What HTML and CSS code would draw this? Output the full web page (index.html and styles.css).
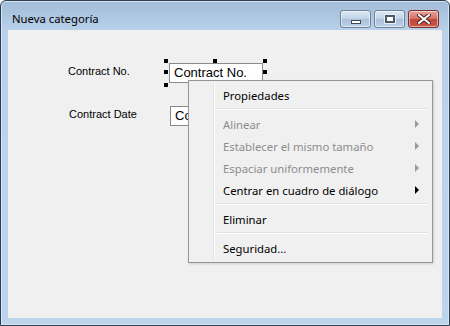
FILE: index.html
```html
<!DOCTYPE html>
<html lang="es">
<head>
    <meta charset="UTF-8">
    <title>Nueva categoría</title>
    <link rel="stylesheet" href="styles.css">
</head>
<body>
<div class="window">
    <div class="titlebar">
        <span class="title">Nueva categoría</span>
        <div class="caption-buttons">
            <div class="cap-btn"><span class="glyph-min"></span></div>
            <div class="cap-btn"><span class="glyph-max"></span></div>
            <div class="cap-btn close">
                <svg width="14" height="10" viewBox="0 0 14 10">
                    <path d="M2 1 L12 9 M12 1 L2 9" stroke="#4a2020" stroke-width="4" stroke-linecap="square"/>
                    <path d="M2 1 L12 9 M12 1 L2 9" stroke="#fff" stroke-width="2" stroke-linecap="square"/>
                </svg>
            </div>
        </div>
    </div>
    <div class="client">
        <!-- designer canvas: controls sit where the form puts them -->
        <span class="label lbl-no">Contract No.</span>
        <div class="textbox tb-no">Contract No.</div>
        <span class="label lbl-date">Contract Date</span>
        <div class="textbox tb-date">Contract Date</div>

        <span class="handle" style="left:156px; top:29px"></span>
        <span class="handle" style="left:205px; top:29px"></span>
        <span class="handle" style="left:255px; top:29px"></span>
        <span class="handle" style="left:156px; top:40px"></span>
        <span class="handle" style="left:255px; top:40px"></span>
        <span class="handle" style="left:156px; top:53px"></span>

        <div class="context-menu">
            <div class="item">Propiedades</div>
            <div class="sep"></div>
            <div class="item disabled">Alinear <span class="arrow"></span></div>
            <div class="item disabled">Establecer el mismo tamaño <span class="arrow"></span></div>
            <div class="item disabled">Espaciar uniformemente <span class="arrow"></span></div>
            <div class="item">Centrar en cuadro de diálogo <span class="arrow"></span></div>
            <div class="sep"></div>
            <div class="item">Eliminar</div>
            <div class="sep"></div>
            <div class="item">Seguridad...</div>
        </div>
    </div>
</div>
</body>
</html>
```
FILE: styles.css
```css
body {
    margin: 0;
    padding: 0;
    font-family: "Noto Sans", sans-serif;
}
.window {
    width: 450px;
    height: 326px;
    box-sizing: border-box;
    border: 1px solid #2c3e50;
    border-radius: 6px 6px 0 0;
    background: linear-gradient(#a2bcd9, #b9d1ea 30px, #bcd4ec);
    display: flex;
    flex-direction: column;
    padding: 0 7px 7px;
    box-shadow: inset 0 0 0 1px #d6e6f5;
}
.titlebar {
    height: 29px;
    display: flex;
    align-items: flex-start;
    justify-content: space-between;
}
.title {
    font-size: 11.3px;
    color: #000;
    padding: 10px 0 0 4px;
}
.caption-buttons {
    display: flex;
    gap: 3px;
    margin: 9px 3px 0 0;
}
.cap-btn {
    width: 29px;
    height: 16px;
    border: 1px solid #6f829a;
    border-radius: 3px;
    background: linear-gradient(#dce7f3, #c1d3e7 50%, #aac0da 51%, #bcd0e6);
    display: flex;
    align-items: center;
    justify-content: center;
    box-shadow: inset 0 0 0 1px rgba(255, 255, 255, 0.5);
}
.cap-btn.close {
    border-color: #7a2f2a;
    background: linear-gradient(#e8a59a, #d2705f 50%, #c2463a 51%, #c9594a);
}
.glyph-min {
    width: 8px;
    height: 2px;
    margin-top: 6px;
    background: #fff;
    border: 1px solid #3d4a5a;
}
.glyph-max {
    width: 6px;
    height: 4px;
    border: 2px solid #4a5868;
    background: #fff;
    box-shadow: 0 0 0 1px #e8eef5;
}
.client {
    flex: 1;
    position: relative;
    background: #f0f0f0;
    overflow: hidden;
}
.label {
    position: absolute;
    font-family: "Liberation Sans", Arial, sans-serif;
    font-size: 11px;
    color: #000;
}
.lbl-no {
    left: 60px;
    top: 35px;
}
.lbl-date {
    left: 61px;
    top: 78px;
}
.textbox {
    position: absolute;
    box-sizing: border-box;
    width: 94px;
    height: 20px;
    border: 1px solid #8a8a8a;
    background: #fff;
    font-family: "Liberation Sans", Arial, sans-serif;
    font-size: 13px;
    line-height: 18px;
    padding-left: 4px;
    white-space: nowrap;
    overflow: hidden;
}
.tb-no {
    left: 161px;
    top: 33px;
}
.tb-date {
    left: 162px;
    top: 76px;
}
.handle {
    position: absolute;
    width: 4px;
    height: 4px;
    background: #000;
}
.context-menu {
    position: absolute;
    left: 180px;
    top: 50px;
    width: 245px;
    box-sizing: border-box;
    border: 1px solid #979797;
    background: #f0f0f0;
    padding: 3px 2px;
    display: flex;
    flex-direction: column;
    font-size: 11.3px;
    box-shadow: 1px 1px 2px rgba(0, 0, 0, 0.15);
}
.context-menu::before {
    content: "";
    position: absolute;
    left: 24px;
    top: 2px;
    bottom: 2px;
    width: 1px;
    background: #e2e3e3;
    border-right: 1px solid #fff;
}
.item {
    height: 22px;
    display: flex;
    align-items: center;
    justify-content: space-between;
    padding: 0 11px 0 32px;
    color: #000;
}
.item.disabled {
    color: #8d8d8d;
}
.arrow {
    width: 0;
    height: 0;
    border-top: 4px solid transparent;
    border-bottom: 4px solid transparent;
    border-left: 4px solid #000;
}
.item.disabled .arrow {
    border-left-color: #9a9a9a;
}
.sep {
    height: 1px;
    margin: 2px 2px 3px 26px;
    background: #e0e0e0;
    border-bottom: 1px solid #fff;
}
```
